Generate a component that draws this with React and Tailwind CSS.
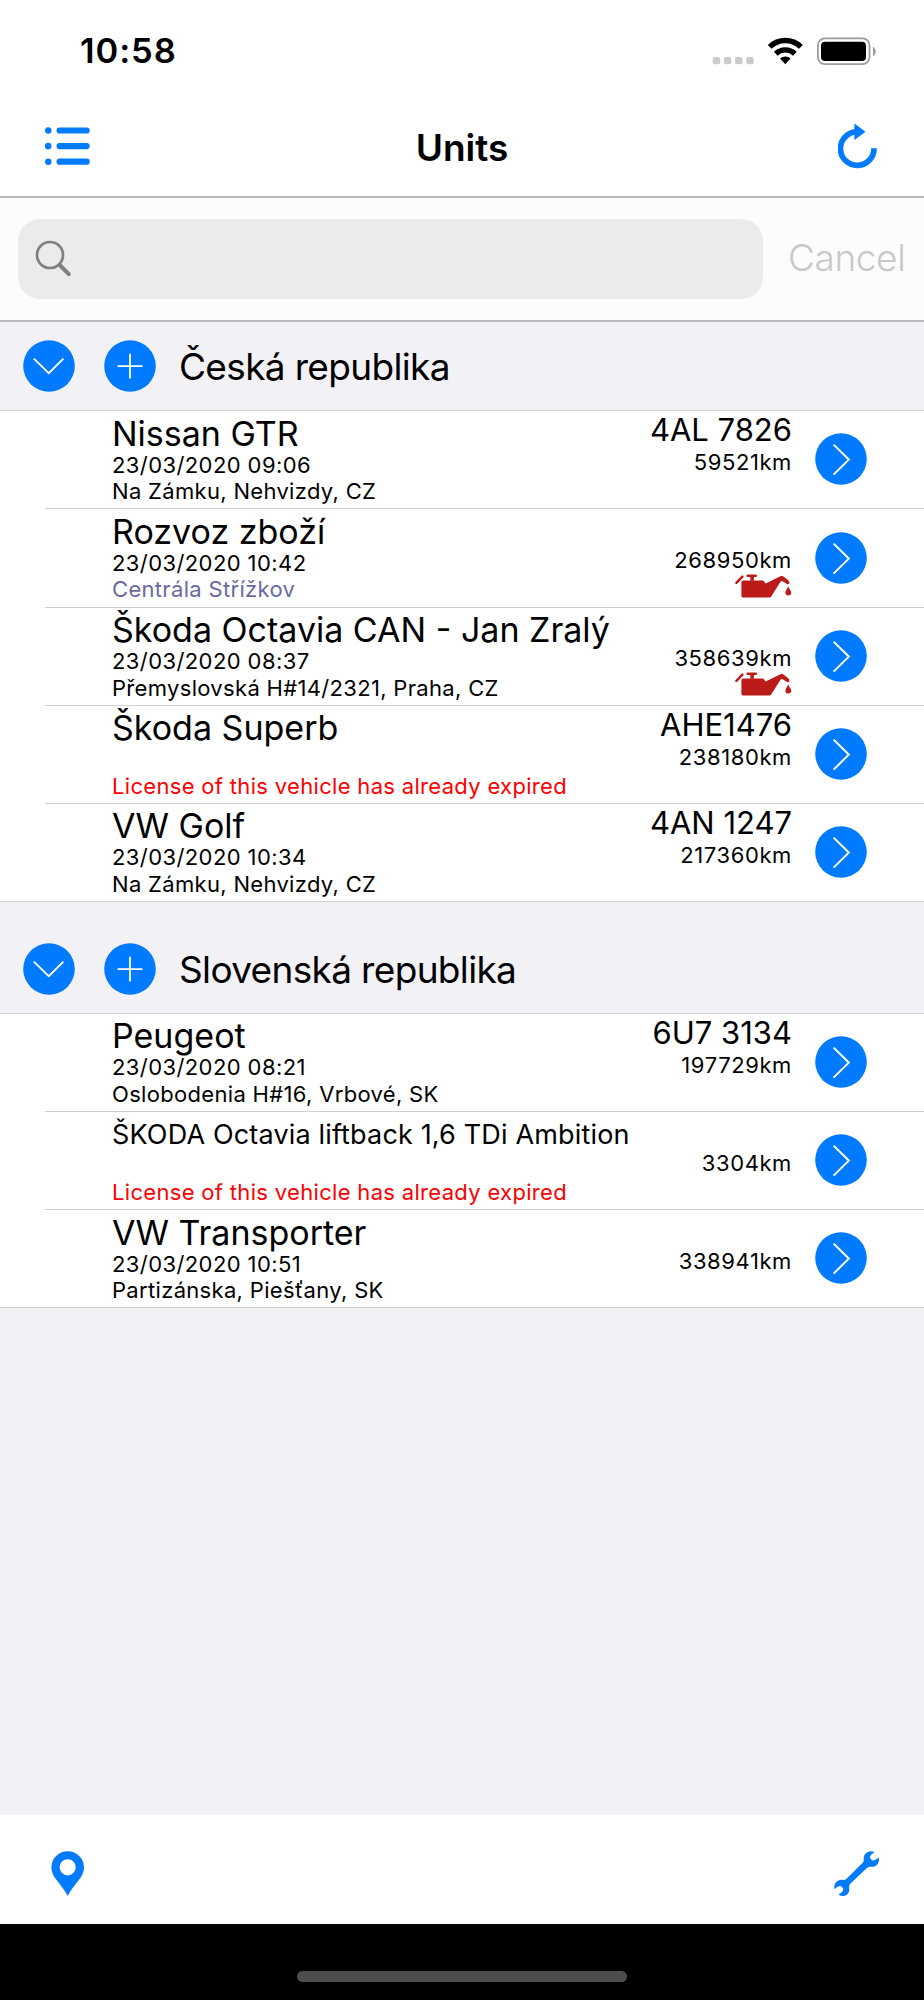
import React, { useState } from 'react';

const GROUPS = [
  {
    id: 'cz',
    name: 'Česká republika',
    units: [
      { name: 'Nissan GTR', time: '23/03/2020 09:06', place: 'Na Zámku, Nehvizdy, CZ', plate: '4AL 7826', km: '59521km' },
      { name: 'Rozvoz zboží', time: '23/03/2020 10:42', place: 'Centrála Střížkov', poi: true, km: '268950km', oil: true },
      { name: 'Škoda Octavia CAN - Jan Zralý', time: '23/03/2020 08:37', place: 'Přemyslovská H#14/2321, Praha, CZ', km: '358639km', oil: true },
      { name: 'Škoda Superb', expired: true, plate: 'AHE1476', km: '238180km' },
      { name: 'VW Golf', time: '23/03/2020 10:34', place: 'Na Zámku, Nehvizdy, CZ', plate: '4AN 1247', km: '217360km' },
    ],
  },
  {
    id: 'sk',
    name: 'Slovenská republika',
    units: [
      { name: 'Peugeot', time: '23/03/2020 08:21', place: 'Oslobodenia H#16, Vrbové, SK', plate: '6U7 3134', km: '197729km' },
      { name: 'ŠKODA Octavia liftback 1,6 TDi Ambition', small: true, expired: true, km: '3304km' },
      { name: 'VW Transporter', time: '23/03/2020 10:51', place: 'Partizánska, Piešťany, SK', km: '338941km' },
    ],
  },
];

function StatusIcons() {
  return (
    <svg className="block h-[30px] w-[166px]" viewBox="712 35 166 30">
      {/* no signal */}
      <g fill="#cbcbcb">
        <rect x="712.7" y="56" width="7.5" height="7.3" rx="2" />
        <rect x="723.8" y="56" width="7.5" height="7.3" rx="2" />
        <rect x="735" y="56" width="7.5" height="7.3" rx="2" />
        <rect x="746.2" y="56" width="7.5" height="7.3" rx="2" />
      </g>
      {/* wifi */}
      <g fill="none" stroke="#000" strokeWidth="5.4">
        <path d="M769.7 45.9A22.3 22.3 0 0 1 800.9 45.9" />
        <path d="M775.7 52.7A14 14 0 0 1 794.9 52.7" />
      </g>
      <path d="M785.3 63.2L780 57.6A8 8 0 0 1 790.6 57.6Z" />
      {/* battery */}
      <rect x="817.9" y="37.4" width="51.6" height="25.7" rx="7" fill="none" stroke="#9c9c9c" strokeWidth="1.8" />
      <rect x="821" y="40.7" width="45" height="19.3" rx="4" />
      <path d="M873 45.8C876.6 47.6 876.6 53.4 873 55.2Z" fill="#9c9c9c" />
    </svg>
  );
}

function ListIcon() {
  return (
    <svg className="h-[40px] w-[46px]" viewBox="0 0 46 40" fill="#007aff">
      {[4.5, 20.1, 35.7].map((y) => (
        <g key={y}>
          <circle cx="3.2" cy={y} r="3.3" />
          <rect x="11.5" y={y - 3.1} width="33.2" height="6.2" rx="3.1" />
        </g>
      ))}
    </svg>
  );
}

function RefreshIcon() {
  return (
    <svg className="h-[46px] w-[40px]" viewBox="0 0 40 46">
      <path d="M36 25.2A16.8 16.8 0 1 1 17.5 8.9" fill="none" stroke="#007aff" strokeWidth="5.7" />
      <path d="M16.4 0.4L27.4 8.8L16.4 17Z" fill="#007aff" />
    </svg>
  );
}

function RoundIcon({ d, width = 1.8 }) {
  return (
    <svg className="size-[52px] shrink-0" viewBox="0 0 52 52">
      <circle cx="26" cy="26" r="25.8" fill="#007aff" />
      <path d={d} fill="none" stroke="#fff" strokeWidth={width} />
    </svg>
  );
}

function OilIcon() {
  return (
    <svg className="-mt-[1.6px] h-[24px] w-[57px]" viewBox="0 0 57 24" fill="#bb1c1a">
      <path d="M1.4 8.8L7.4 2.6" stroke="#bb1c1a" strokeWidth="2.4" strokeLinecap="round" />
      <path d="M12.5 0.4H20.8Q22 0.4 22 1.7Q22 2.9 20.8 2.9H18.9V6.8H15.3V2.9H12.5Q11.4 2.9 11.4 1.7Q11.4 0.4 12.5 0.4Z" />
      <path d="M8.3 6.6H27.4Q28.6 6.6 29.2 7.8L30.6 9.6L46 2.1Q47 1.6 48 2.2L53 6Q54.8 7.6 54.2 9.8Q52.6 10.6 51.2 9.6L46.8 6.8Q45.8 7.2 45 8.6L36.2 22.6Q35.8 23.4 34.8 23.4H7.8Q6.4 23.4 6.4 22V8.5Q6.4 6.6 8.3 6.6Z" />
      <path d="M53 12.2C53.8 14.4 56.2 16.4 56.2 18.6A2.9 2.9 0 0 1 50.4 18.6C50.4 16.4 52.6 14.6 53 12.2Z" />
    </svg>
  );
}

function PinIcon() {
  return (
    <svg className="h-[46px] w-[34px]" viewBox="0 0 34 46">
      <path
        d="M16.7 0.2C25.8 0.2 33 7.4 33 16.4C33 21 31 24.8 28.4 28.2C24.2 33.8 20.2 38.2 16.7 45C13.2 38.2 9.2 33.8 5 28.2C2.4 24.8 0.4 21 0.4 16.4C0.4 7.4 7.6 0.2 16.7 0.2ZM16.7 8.2A8.1 8.1 0 1 0 16.7 24.4A8.1 8.1 0 1 0 16.7 8.2Z"
        fill="#007aff"
        fillRule="evenodd"
      />
    </svg>
  );
}

function WrenchIcon() {
  return (
    <svg className="size-[46px]" viewBox="0 0 46 46" fill="#007aff">
      <path d="M40.7 1.2Q38.2 0.1 35.3 0.4Q32.4 1 31 3.2Q29.6 5 29.7 7.4Q30 9.8 29.2 11.2L12.8 27.6Q11.4 29 9.4 28.9Q6.6 28.6 4.3 29.5Q1.6 31 0.7 33.5Q0 35.6 0.3 38L4 35.5Q6.4 34.4 8 36Q9.8 37.6 9.1 39.6Q8 41.6 4.5 43.6Q6.6 45.2 9.2 45.1Q12 44.8 13.9 42.7Q15.4 41 15.3 38.6Q14.9 36 15.5 33.6L33.4 16.4Q35 15.6 37.4 15.8Q41.6 16 43.6 13Q45.6 10 45 6.4L41.4 8.8Q38.8 10.2 37.2 8.6Q35.4 6.8 36.2 5Q37.2 3 40.7 1.2Z" />
    </svg>
  );
}

function UnitRow({ unit, last }) {
  return (
    <li className="flex h-[98.2px] bg-white pl-[45px]">
      <div className={`flex flex-1 pl-[67px] ${last ? '' : 'border-b border-[#d1d1d4]'}`}>
        <div className="flex flex-1 flex-col whitespace-nowrap pt-[2.4px]">
          {unit.small ? (
            <h3 className="h-[40px] text-[27px] leading-[40px] tracking-[0.16px]">{unit.name}</h3>
          ) : (
            <h3 className="h-[40px] text-[34px] leading-[40px]">{unit.name}</h3>
          )}
          <p className="h-[23.5px] text-[22px] leading-[23.5px] tracking-[0.41px]">{unit.time}</p>
          {unit.expired ? (
            <p className="text-[22px] leading-[29px] tracking-[0.32px] text-[#ff0000]">License of this vehicle has already expired</p>
          ) : (
            <p className={`text-[22px] leading-[29px] tracking-[0.32px] ${unit.poi ? 'text-[#6a6a9f]' : ''}`}>{unit.place}</p>
          )}
        </div>
        <div className="flex flex-col items-end whitespace-nowrap pt-[0.8px]">
          <p className="h-[36px] text-[31px] leading-[36px]">{unit.plate}</p>
          <p className="text-[22px] leading-[29.6px] tracking-[0.6px]">{unit.km}</p>
          {unit.oil && <OilIcon />}
        </div>
        <button className="ml-[23px] mr-[57px] mt-[22.2px] h-[52px]">
          <RoundIcon d="M18.6 11.6L33.8 26.6L18.6 41.6" width={2} />
        </button>
      </div>
    </li>
  );
}

function Group({ group, first }) {
  const [open, setOpen] = useState(true);

  return (
    <section>
      <div className={`flex items-end border-b border-[#d1d1d4] bg-[#f2f1f6] pb-[18px] pl-[23px] ${first ? 'h-[89.3px]' : '-mt-px h-[112.7px] border-t'}`}>
        <button onClick={() => setOpen(!open)}>
          <RoundIcon d="M10.8 18.6L25.8 33.2L40.4 18.6" />
        </button>
        <button className="ml-[28.5px]">
          <RoundIcon d="M13.6 26.2H38.4M26 13.8V38.6" />
        </button>
        <h2 className="ml-[23.5px] h-[51px] whitespace-nowrap text-[37px] leading-[51px] tracking-[-0.66px]">{group.name}</h2>
      </div>
      {open && (
        <ul>
          {group.units.map((unit, i) => (
            <UnitRow key={unit.name} unit={unit} last={i === group.units.length - 1} />
          ))}
        </ul>
      )}
    </section>
  );
}

export default function App() {
  return (
    <div className="flex h-[2000px] w-[924px] flex-col overflow-hidden bg-[#f2f1f6] font-[Inter,sans-serif] text-black">
      {/* Status bar */}
      <div className="flex h-[101px] shrink-0 items-center justify-between bg-white pl-[80px] pr-[46px]">
        <span className="text-[34.5px] font-semibold tracking-[0.9px]">10:58</span>
        <StatusIcons />
      </div>

      {/* Navigation bar */}
      <header className="flex h-[97px] shrink-0 items-center justify-between border-b-2 border-[#bababc] bg-white pl-[45px] pr-[46px]">
        <button className="-mt-[5px]">
          <ListIcon />
        </button>
        <h1 className="-ml-[5px] -mt-[2px] text-[37px] font-semibold">Units</h1>
        <button className="-mt-[5px]">
          <RefreshIcon />
        </button>
      </header>

      {/* Search */}
      <div className="flex h-[124px] shrink-0 items-center border-b-2 border-[#bababc] bg-[#fcfcfc] pl-[18px] pr-[18px]">
        <div className="flex h-[80px] w-[745px] items-center rounded-[22px] bg-[#ebebeb] pl-[17px]">
          <svg className="size-[38px]" viewBox="0 0 38 38" fill="none" stroke="#808084">
            <circle cx="15" cy="15" r="13" strokeWidth="2.7" />
            <path d="M24.7 25L33.8 34.2" strokeWidth="4" strokeLinecap="round" />
          </svg>
        </div>
        <span className="-mt-[2px] ml-[25px] text-[37px] font-light tracking-[-0.4px] text-[#c8c8c8]">Cancel</span>
      </div>

      <main className="flex-1">
        {GROUPS.map((group, i) => (
          <Group key={group.id} group={group} first={i === 0} />
        ))}
        <div className="-mt-px border-t border-[#d1d1d4]" />
      </main>

      {/* Toolbar */}
      <footer className="flex h-[109px] shrink-0 items-start justify-between bg-white pl-[51px] pr-[44px] pt-[36px]">
        <button>
          <PinIcon />
        </button>
        <button>
          <WrenchIcon />
        </button>
      </footer>
      <div className="flex h-[76px] shrink-0 justify-center bg-black pt-[47px]">
        <div className="h-[11px] w-[330px] rounded-full bg-[#4d4d4d]" />
      </div>
    </div>
  );
}
